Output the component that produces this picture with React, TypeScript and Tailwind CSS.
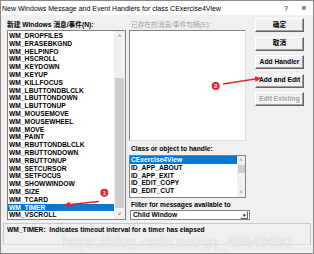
import React from "react";

const msgs = [
  "WM_DROPFILES",
  "WM_ERASEBKGND",
  "WM_HELPINFO",
  "WM_HSCROLL",
  "WM_KEYDOWN",
  "WM_KEYUP",
  "WM_KILLFOCUS",
  "WM_LBUTTONDBLCLK",
  "WM_LBUTTONDOWN",
  "WM_LBUTTONUP",
  "WM_MOUSEMOVE",
  "WM_MOUSEWHEEL",
  "WM_MOVE",
  "WM_PAINT",
  "WM_RBUTTONDBLCLK",
  "WM_RBUTTONDOWN",
  "WM_RBUTTONUP",
  "WM_SETCURSOR",
  "WM_SETFOCUS",
  "WM_SHOWWINDOW",
  "WM_SIZE",
  "WM_TCARD",
  "WM_TIMER",
  "WM_VSCROLL",
];

const classes = ["CExercise4View", "ID_APP_ABOUT", "ID_APP_EXIT", "ID_EDIT_COPY", "ID_EDIT_CUT"];

function Btn({ children, disabled }: { children: React.ReactNode; disabled?: boolean }) {
  return (
    <div
      className={
        "h-[14px] w-[49px] flex items-center justify-center bg-[#f0f0f0] border border-t-white border-l-white border-r-[#646464] border-b-[#646464] shadow-[inset_-1px_-1px_0_#a0a0a0] text-[6.7px] font-bold leading-none " +
        (disabled ? "text-[#a0a0a0] [text-shadow:1px_1px_0_#ffffff]" : "text-black")
      }
    >
      {children}
    </div>
  );
}

export default function App() {
  return (
    <div className="relative w-[314px] h-[254px] overflow-hidden bg-[#f0f0f0] border border-[#8a8a8a] font-['Liberation_Sans','Noto_Sans_CJK_SC',sans-serif] text-black">
      {/* title bar */}
      <div className="h-[14px] bg-white flex items-center pl-[1px] text-[7px] leading-none">
        <span className="flex-1 whitespace-nowrap">New Windows Message and Event Handlers for class CExercise4View</span>
        <span className="w-[10px] text-[7px] text-center">?</span>
        <span className="w-[12px] ml-[7px] mr-[3px] text-[9px] text-center">×</span>
      </div>

      <div className="flex pl-[6px] pt-[5px]">
        {/* left column */}
        <div className="w-[119px] flex flex-col">
          <div className="h-[10px] text-[6.7px] font-bold leading-[10px] whitespace-nowrap">新建 Windows 消息/事件(N):</div>
          <div className="h-[190px] bg-white border border-[#828282] flex">
            <div className="flex-1 flex flex-col pt-[1px]">
              {msgs.map((m) => (
                <div
                  key={m}
                  className={
                    "h-[7.8px] leading-[7.8px] text-[6.7px] font-bold pl-[1px] whitespace-nowrap " +
                    (m === "WM_TIMER" ? "bg-[#0078d7] text-white" : "text-black")
                  }
                >
                  {m}
                </div>
              ))}
            </div>
            <div className="w-[11px] bg-[#f0f0f0] flex flex-col items-center">
              <div className="h-[10px] text-[6px] leading-[10px] text-[#606060]">˄</div>
              <div className="h-[37px]" />
              <div className="h-[130px] w-[9px] bg-[#cdcdcd]" />
              <div className="flex-1" />
              <div className="h-[10px] text-[6px] leading-[10px] text-[#606060]">˅</div>
            </div>
          </div>
        </div>

        {/* middle column */}
        <div className="w-[120px] ml-[3px] flex flex-col">
          <div className="h-[10px] text-[6.7px] leading-[10px] text-[#a0a0a0] whitespace-nowrap pl-[2px]">已存在的消息/事件句柄(E):</div>
          <div className="w-[117px] h-[111px] bg-white border border-[#828282] border-r-[#e0e0e0] border-b-[#e0e0e0]" />
          <div className="h-[10px] mt-[3px] text-[6.7px] font-bold leading-[10px] pl-[2px] whitespace-nowrap">Class or object to handle:</div>
          <div className="w-[117px] h-[43px] mt-[1px] bg-white border border-[#828282] flex">
            <div className="flex-1 flex flex-col">
              {classes.map((c, i) => (
                <div
                  key={c}
                  className={
                    "h-[7.8px] leading-[7.8px] text-[6.7px] font-bold pl-[1px] whitespace-nowrap " +
                    (i === 0 ? "bg-[#0078d7] text-white" : "text-black")
                  }
                >
                  {c}
                </div>
              ))}
            </div>
            <div className="w-[8px] bg-[#f0f0f0] flex flex-col items-center">
              <div className="h-[9px] text-[5px] leading-[9px] text-[#606060]">˄</div>
              <div className="h-[8px] w-[7px] bg-[#cdcdcd]" />
              <div className="flex-1" />
              <div className="h-[9px] text-[5px] leading-[9px] text-[#606060]">˅</div>
            </div>
          </div>
          <div className="h-[10px] mt-[2px] text-[6.7px] font-bold leading-[10px] pl-[2px] whitespace-nowrap">Filter for messages available to</div>
          <div className="w-[120px] h-[10px] ml-[1px] bg-white border border-[#828282] flex items-center">
            <span className="flex-1 pl-[2px] text-[6.7px] font-bold leading-none">Child Window</span>
            <div className="w-[8px] h-[8px] mr-[1px] bg-[#f0f0f0] border border-t-white border-l-white border-r-[#646464] border-b-[#646464] flex items-center justify-center text-[5px] leading-none">▾</div>
          </div>
        </div>

        {/* buttons */}
        <div className="ml-[6px] flex flex-col gap-[4.5px] -mt-[2px]">
          <Btn>确定</Btn>
          <Btn>取消</Btn>
          <Btn>Add Handler</Btn>
          <Btn>Add and Edit</Btn>
          <Btn disabled>Edit Existing</Btn>
        </div>
      </div>

      {/* status */}
      <div className="mx-[2px] mt-[3px] h-[22px] border border-[#c8c8c8] border-b-[#dedede] px-[3px] pt-[3px] text-[6.7px] font-bold leading-none whitespace-nowrap">
        WM_TIMER:&nbsp; Indicates timeout interval for a timer has elapsed
      </div>

      {/* watermark */}
      <div className="absolute left-[62px] top-[233px] text-[15px] leading-none text-white/70 whitespace-nowrap [text-shadow:0_0_1px_rgba(140,140,140,0.5)] pointer-events-none">
        https://blog.csdn.net/qq_46649692
      </div>

      {/* annotations */}
      <svg className="absolute left-0 top-0 pointer-events-none" width="314" height="254" viewBox="0 0 314 254">
        <defs>
          <marker id="ah" markerWidth="6" markerHeight="6" refX="5" refY="3" orient="auto" markerUnits="userSpaceOnUse">
            <path d="M0,0 L6,3 L0,6 Z" fill="#e8232a" />
          </marker>
        </defs>
        <line x1="98" y1="200.5" x2="64" y2="204" stroke="#e8232a" strokeWidth="1.6" markerEnd="url(#ah)" />
        <circle cx="103.3" cy="191.7" r="4" fill="#e8232a" />
        <text x="103.3" y="193.8" fontSize="6" fontWeight="bold" fill="white" textAnchor="middle" fontFamily="Liberation Sans, sans-serif">1</text>
        <line x1="222" y1="83" x2="259" y2="77.3" stroke="#e8232a" strokeWidth="1.6" markerEnd="url(#ah)" />
        <circle cx="214.7" cy="85" r="4" fill="#e8232a" />
        <text x="214.7" y="87.1" fontSize="6" fontWeight="bold" fill="white" textAnchor="middle" fontFamily="Liberation Sans, sans-serif">2</text>
      </svg>
    </div>
  );
}
